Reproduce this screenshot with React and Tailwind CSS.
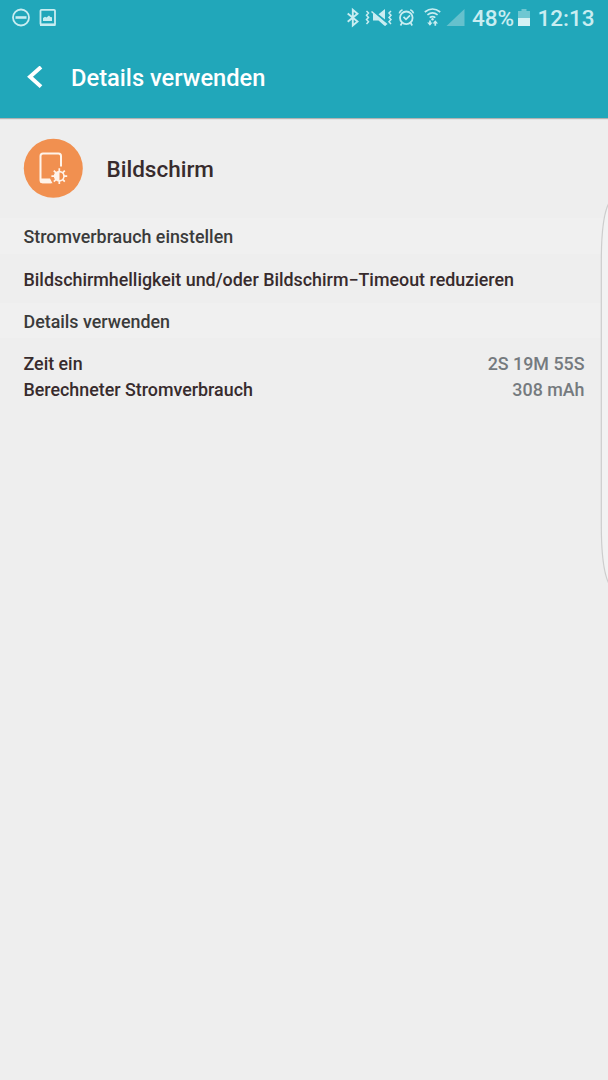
const settings = [
  { label: "Zeit ein", value: "2S 19M 55S" },
  { label: "Berechneter Stromverbrauch", value: "308 mAh" },
];

function StatusBar() {
  return (
    <div className="flex h-9 items-center justify-between pl-3 pr-[13.500px] text-[#c9edf1]">
      <svg width="46" height="36" viewBox="0 0 46 36" fill="none" stroke="currentColor">
        <circle cx="9" cy="17.5" r="8" strokeWidth="1.8" />
        <path d="M3.5 17.5h11" strokeWidth="2.6" />
        <rect x="28.5" y="9.800" width="14.5" height="15" rx="1" strokeWidth="1.8" />
        <path d="M28 24.7h15.500" strokeWidth="2.6" />
        <path d="M31 21v-3l2-1.200 1.500.8 2.500-2 1.300 1.400 1.700.3V21z" fill="currentColor" stroke="none" />
      </svg>

      <div className="flex items-center">
        <svg width="122" height="36" viewBox="344 0 122 36" fill="none" stroke="currentColor">
          <path d="M347.700 13.500l9.800 8-4.700 4V9.800l4.700 4-9.800 8" strokeWidth="1.900" />
          <path
            d="M366.500 11l2 2-2 2.200 2 2.200-2 2.200 2 2.200-2 2.200M391 11l-2 2 2 2.200-2 2.200 2 2.200-2 2.200 2 2.200"
            strokeWidth="1.500"
          />
          <path
            d="M373 13.800h1.500l11.500 9.700V25.800h-1.500l-6-5.300H373zM378.500 14.300l6.500-5.300V19.500z"
            fill="currentColor"
            stroke="none"
          />
          <path d="M371.500 11.500l15.500 13" strokeWidth="1.500" />
          <circle cx="406.300" cy="17.800" r="6.300" strokeWidth="1.800" />
          <path
            d="M403.500 16.800l2.500 2.600 4-4M399.300 13.300q.5-2.600 3.200-3.600M413.500 13.300q-.5-2.600-3.200-3.600M402 23l-1.500 2.500M410.700 23l1.500 2.500"
            strokeWidth="1.700"
          />
          <path
            d="M424.800 12q7.700-6 15.400 0M427.400 14.900q5.100-4 10.200 0M429.700 17.600q2.800-2.100 5.600 0"
            strokeWidth="1.700"
          />
          <circle cx="432.500" cy="19.300" r="1.200" fill="currentColor" stroke="none" />
          <path d="M430 20.500v4M435.300 25.800v-4" strokeWidth="1.700" />
          <path d="M427.200 22.600h5.400l-2.700 3.200zM432.600 23.500h5.400l-2.700-3.200z" fill="currentColor" stroke="none" />
          <path d="M446.500 26H464.500V9z" fill="#65c1cd" stroke="none" />
        </svg>
        <span className="ml-[6.500px] w-[42.500px] text-[22.500px] font-medium leading-9">48%</span>
        <svg className="ml-[3.500px] mr-[0.500px]" width="12" height="36" viewBox="0 0 12 36">
          <path d="M0 11h3.500V9h5v2H12v7H0z" fill="#6fc7d2" />
          <path d="M0 18h12v8H0z" fill="#d4f1f4" />
        </svg>
        <span className="ml-[7px] w-[57px] text-[22.500px] font-medium leading-9">12:13</span>
      </div>
    </div>
  );
}

function BildschirmIcon() {
  return (
    <svg width="60" height="60" viewBox="0 0 60 60" fill="none">
      <circle cx="30.300" cy="30.300" r="29.500" fill="#f19050" />
      <path
        d="M38 28.500V18q0-2.500-2.500-2.500H20q-2.500 0-2.500 2.500v24q0 2.300 2.300 2.300H28"
        stroke="#fff3e9"
        strokeWidth="2"
      />
      <path d="M17 40.500h10l2.500 4.800H19q-2 0-2-2z" fill="#fff3e9" />
      <path
        d="M36.300 30.300v15.800M28.400 38.200h15.800M30.800 32.700l11 11M41.800 32.700l-11 11"
        stroke="#fff3e9"
        strokeWidth="1.700"
      />
      <circle cx="36.300" cy="38.200" r="5.500" fill="#fff3e9" />
      <path d="M36.500 34.500a3.700 3.700 0 0 1 0 7.400z" fill="#f19050" />
    </svg>
  );
}

function SectionHeader({ children }) {
  return (
    <h2 className="flex items-center bg-[#f0f0f0] pl-[23.500px] pt-[3px] text-[17.850px] font-medium text-[#3b3b3b]">
      {children}
    </h2>
  );
}

export default function App() {
  return (
    <div className="relative h-[1080px] w-[608px] overflow-hidden bg-[#eeeeee] font-['Roboto',sans-serif] text-[#372b2d]">
      <header className="h-[118px] bg-[#21a7ba] shadow-[0_1px_1px_rgba(0,0,0,0.25)]">
        <StatusBar />
        <div className="flex h-[82px] items-center pl-[27px] text-white">
          <svg width="16" height="22" viewBox="0 0 16 22" fill="none">
            <path d="M14 1L3 10.800 14 20.600" stroke="currentColor" strokeWidth="3.900" />
          </svg>
          <h1 className="ml-[28px] pt-[3.500px] text-[23.700px] font-medium">Details verwenden</h1>
        </div>
      </header>

      <main>
        <div className="flex h-[100px] items-center gap-[23.500px] pl-[23px]">
          <BildschirmIcon />
          <span className="pt-[4px] text-[22.500px] font-medium">Bildschirm</span>
        </div>

        <div className="grid grid-rows-[36px_49px_35px]">
          <SectionHeader>Stromverbrauch einstellen</SectionHeader>
          <p className="flex items-center whitespace-nowrap pl-[23.500px] pt-[3px] text-[17.880px] font-medium">
            Bildschirmhelligkeit und/oder Bildschirm−Timeout reduzieren
          </p>
          <SectionHeader>Details verwenden</SectionHeader>
        </div>

        <dl className="pl-[23.500px] pr-[23.500px] pt-[13px] text-[17.850px] font-medium leading-[26px]">
          {settings.map((s) => (
            <div key={s.label} className="flex justify-between">
              <dt>{s.label}</dt>
              <dd className="text-[#757a7e]">{s.value}</dd>
            </div>
          ))}
        </dl>
      </main>

      {/* edge panel handle */}
      <svg className="absolute right-0 top-[200px]" width="10" height="390" viewBox="0 0 10 390">
        <path
          d="M11 3C6 12 3.300 30 3.300 62V325C3.300 357 6 374 11 384"
          fill="#f2f2f2"
          stroke="#cdcdcd"
          strokeWidth="1.200"
        />
      </svg>
    </div>
  );
}
